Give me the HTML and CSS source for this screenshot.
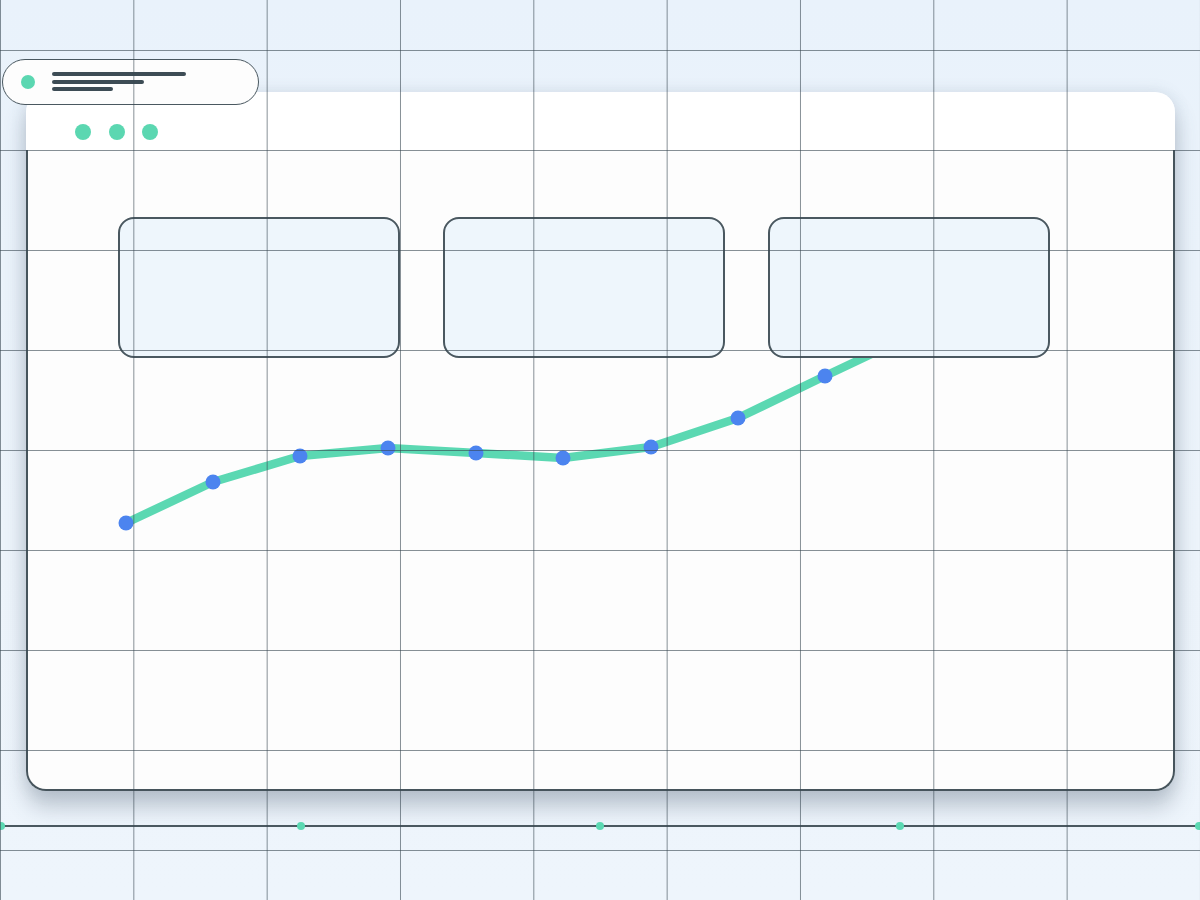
FILE: index.html
```html
<!DOCTYPE html>
<html lang="en">
<head>
  <meta charset="UTF-8" />
  <meta name="viewport" content="width=device-width, initial-scale=1.0"/>
  <title>Dashboard Sketch</title>
  <link rel="stylesheet" href="styles.css">
</head>
<body>
  <div class="stage">

    <div class="window">
      <div class="window-header">
        <span class="dot"></span>
        <span class="dot"></span>
        <span class="dot"></span>
      </div>

      <div class="window-body">
        <!-- chart drawn in page coordinates -->
        <svg class="chart" viewBox="26 150 1149 641" preserveAspectRatio="none">
          <polyline class="chart-line"
            points="126,523 213,482 300,456 388,448 476,453 563,458 651,447 738,418 825,376 880,350 940,320" />
          <circle class="chart-point" cx="126" cy="523" r="7.5" />
          <circle class="chart-point" cx="213" cy="482" r="7.5" />
          <circle class="chart-point" cx="300" cy="456" r="7.5" />
          <circle class="chart-point" cx="388" cy="448" r="7.5" />
          <circle class="chart-point" cx="476" cy="453" r="7.5" />
          <circle class="chart-point" cx="563" cy="458" r="7.5" />
          <circle class="chart-point" cx="651" cy="447" r="7.5" />
          <circle class="chart-point" cx="738" cy="418" r="7.5" />
          <circle class="chart-point" cx="825" cy="376" r="7.5" />
        </svg>

        <div class="cards">
          <div class="card"></div>
          <div class="card"></div>
          <div class="card"></div>
        </div>
      </div>
    </div>

    <div class="axis">
      <span class="axis-dot"></span>
      <span class="axis-dot"></span>
      <span class="axis-dot"></span>
      <span class="axis-dot"></span>
      <span class="axis-dot"></span>
    </div>

    <div class="status-pill">
      <span class="pill-dot"></span>
      <div class="pill-lines">
        <span class="pill-line long"></span>
        <span class="pill-line mid"></span>
        <span class="pill-line short"></span>
      </div>
    </div>

    <div class="grid-overlay"></div>
  </div>
</body>
</html>
```

FILE: styles.css
```css
body {
  margin: 0;
  font-family: "Liberation Sans", Arial, sans-serif;
  background: linear-gradient(180deg, #e9f2fb 0%, #edf4fb 60%, #eef5fc 100%);
}
.stage {
  position: relative;
  width: 1200px;
  height: 900px;
  overflow: hidden;
  padding-top: 92px;
  box-sizing: border-box;
}

/* window */
.window {
  margin-left: 26px;
  width: 1149px;
  border-radius: 20px;
  box-shadow: 0 16px 22px rgba(70, 85, 105, 0.3), 0 0 16px rgba(90, 110, 130, 0.14);
}
.window-header {
  height: 58px;
  box-sizing: border-box;
  padding: 32px 0 0 49px;
  display: flex;
  gap: 17.5px;
  background: #ffffff;
  border-radius: 20px 20px 0 0;
}
.dot {
  width: 16px;
  height: 16px;
  border-radius: 50%;
  background: #5bd7b1;
}
.window-body {
  position: relative;
  height: 641px;
  box-sizing: border-box;
  background: #fdfdfd;
  border: 2px solid #46545c;
  border-top: none;
  border-radius: 0 0 20px 20px;
}
.chart {
  position: absolute;
  left: -2px;
  top: 0;
  width: 1149px;
  height: 641px;
}
.chart-line {
  fill: none;
  stroke: #5bd8b2;
  stroke-width: 8.5;
  stroke-linejoin: round;
}
.chart-point {
  fill: #4c84ef;
}
.cards {
  position: relative;
  z-index: 1;
  display: flex;
  gap: 43px;
  padding: 67px 0 0 90px;
}
.card {
  width: 282px;
  height: 141px;
  box-sizing: border-box;
  border: 2px solid #4a5860;
  border-radius: 16px;
  background: #eef6fc;
}

/* bottom axis */
.axis {
  position: relative;
  margin: 31px -3px 0;
  height: 8px;
  display: flex;
  justify-content: space-between;
  align-items: center;
}
.axis::before {
  content: "";
  position: absolute;
  left: 0;
  right: 0;
  top: 3px;
  height: 1.5px;
  background: #4a5860;
}
.axis-dot {
  position: relative;
  width: 8px;
  height: 8px;
  border-radius: 50%;
  background: #5bd8b2;
}

/* floating status pill */
.status-pill {
  position: absolute;
  left: 2px;
  top: 59px;
  width: 257px;
  height: 46px;
  box-sizing: border-box;
  border: 1.5px solid #4a5860;
  border-radius: 23px;
  background: #fdfdfd;
  display: flex;
  align-items: center;
  padding-left: 18px;
  gap: 17px;
  z-index: 2;
}
.pill-dot {
  width: 14px;
  height: 14px;
  border-radius: 50%;
  background: #5bd7b1;
}
.pill-lines {
  display: flex;
  flex-direction: column;
  gap: 3.5px;
  margin-top: -1px;
}
.pill-line {
  height: 4px;
  border-radius: 2px;
  background: #3d4c55;
}
.pill-line.long { width: 134px; }
.pill-line.mid { width: 92px; }
.pill-line.short { width: 61px; }

/* grid on top of everything */
.grid-overlay {
  position: absolute;
  inset: 0;
  z-index: 3;
  pointer-events: none;
  background-image:
    linear-gradient(to right, rgba(55, 70, 80, 0.6) 1px, transparent 1px),
    linear-gradient(to bottom, rgba(55, 70, 80, 0.6) 1px, transparent 1px);
  background-size: 133.333px 100%, 100% 100px;
  background-position: 0 0, 0 50px;
}
```
